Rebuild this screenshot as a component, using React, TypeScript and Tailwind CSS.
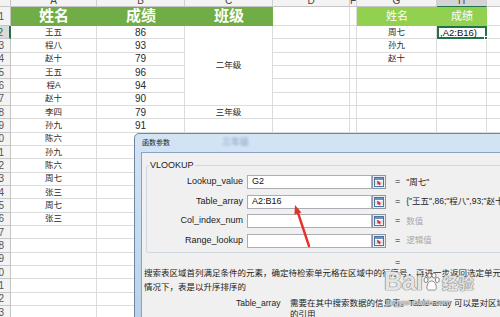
import React from 'react';

const names = ['王五', '程八', '赵十', '王五', '程A', '赵十', '李四', '孙九', '陈六', '孙九', '陈六', '周七', '张三', '周七', '张三'];
const scores = ['86', '93', '79', '96', '94', '90', '79', '91'];
const lookups = ['周七', '孙九', '赵十'];
const letters = ['A', 'B', 'C', 'D', 'F', 'G', 'H', 'I'];

const cell = 'flex items-center justify-center overflow-hidden whitespace-nowrap border-r border-b border-[#dcdcdc]';

function ColHead({ label, active }: { label: string; active?: boolean }) {
  return (
    <div
      className={`overflow-hidden border-r border-b border-r-[#d0d0d0] ${
        active ? 'bg-[#d4d4d4] border-b-[#217346]' : 'bg-[#f3f3f3] border-b-[#c6c6c6]'
      }`}
    >
      <div className="-mt-[5px] text-center text-[10px] leading-[12px] text-[#444]">{label}</div>
    </div>
  );
}

function RowHead({ n, active }: { n: number; active?: boolean }) {
  return (
    <div
      className={`flex items-center justify-end overflow-hidden whitespace-nowrap border-b border-r pr-[6px] text-[10px] ${
        active
          ? 'bg-[#dadada] text-[#217346] border-r-2 border-r-[#217346] border-b-[#c6c6c6]'
          : 'bg-[#f3f3f3] text-[#555] border-[#c6c6c6]'
      }`}
    >
      {n}
    </div>
  );
}

function CollapseIcon() {
  return (
    <svg width="14" height="14" viewBox="0 0 14 14" className="shrink-0">
      <rect x="0.5" y="0.5" width="13" height="13" fill="#e9edf1" stroke="#8d98a3" />
      <rect x="2.5" y="2.5" width="9" height="9" fill="#ffffff" stroke="#4d73a0" />
      <rect x="3" y="3" width="8" height="2" fill="#6b92c2" />
      <line x1="3" y1="7" x2="11" y2="7" stroke="#9fb4cc" strokeWidth="0.7" />
      <line x1="3" y1="9" x2="11" y2="9" stroke="#9fb4cc" strokeWidth="0.7" />
      <path d="M5 5.5 L9.5 8.5 L7.8 8.6 L8.6 10.2 L7.6 10.6 L6.9 9.1 L5.8 10 Z" fill="#d8262a" />
    </svg>
  );
}

const fields = [
  { label: 'Lookup_value', value: 'G2', result: '"周七"', muted: false },
  { label: 'Table_array', value: 'A2:B16', result: '{"王五",86;"程八",93;"赵十",79;"王五",96', muted: false },
  { label: 'Col_index_num', value: '', result: '数值', muted: true },
  { label: 'Range_lookup', value: '', result: '逻辑值', muted: true },
];

function Dialog() {
  return (
    <div className="absolute left-[134px] top-[133px] h-[200px] w-[400px] rounded-tl-[5px] border border-[#6f86a3] bg-linear-to-b from-[#d3e4f5] to-[#b8d0ea]">
      <div className="flex h-[18px] items-center pl-[7px]">
        <span className="text-[7px] text-[#1e1e1e]">函数参数</span>
        <span className="ml-[52px] text-[9px] text-[#6d86a6] opacity-70 blur-[1px]">三年级</span>
      </div>
      <div className="ml-[6px] h-full border border-[#8aa2bf] bg-[#f0f0f0]">
        <div className="pt-[6px]">
          <fieldset className="ml-[4px] rounded-[3px] border border-[#d0d7de] pb-[4px] pt-[4px]">
            <legend className="ml-[2px] px-[1px] text-[9px] leading-[12px] text-[#222]">VLOOKUP</legend>
            <div className="flex flex-col gap-[5.5px]">
              {fields.map((f) => (
                <div key={f.label} className="flex h-[14px] items-center whitespace-nowrap">
                  <div className="w-[96px] shrink-0 text-right text-[9px] text-[#222]">{f.label}</div>
                  <div className="ml-[4px] flex h-[14px] w-[125px] shrink-0 items-center border border-[#abadb3] bg-white pl-[4px] text-[9px] text-[#111]">
                    {f.value}
                  </div>
                  <CollapseIcon />
                  <div className="ml-[9px] text-[9px] text-[#222]">=</div>
                  <div className={`ml-[6px] text-[8.5px] ${f.muted ? 'text-[#a8a8a8]' : 'text-[#222]'}`}>{f.result}</div>
                </div>
              ))}
            </div>
          </fieldset>
        </div>
        <div className="mt-[4px] pl-[253px] text-[9px] leading-[10px] text-[#222]">=</div>
        <div className="-mt-[1px] whitespace-nowrap pl-[2px] text-[8.5px] leading-[14px] text-[#222]">
          <div>搜索表区域首列满足条件的元素，确定待检索单元格在区域中的行序号，再进一步返回选定单元格的值。默认</div>
          <div>情况下，表是以升序排序的</div>
        </div>
        <div className="mt-[4px] flex whitespace-nowrap pl-[94px] text-[8.5px] leading-[11px] text-[#222]">
          <div className="w-[54px] shrink-0 text-[8.5px]">Table_array</div>
          <div>
            <div>需要在其中搜索数据的信息表。Table-array 可以是对区域或区域名称</div>
            <div>的引用</div>
          </div>
        </div>
      </div>
    </div>
  );
}

function Watermark() {
  const glyph = 'text-white/80 [text-shadow:0_0_1px_#7a7a7a,0_0_1px_#7a7a7a,0_0_1px_#7a7a7a]';
  return (
    <div className="pointer-events-none absolute left-[384px] top-[268px]">
      <div className="flex items-end">
        <span className={`font-['Liberation_Sans',sans-serif] text-[25px] font-bold leading-[26px] ${glyph}`}>Bai</span>
        <svg width="17" height="20" viewBox="0 0 17 20" className="mb-[2px]">
          <g fill="#ffffff" fillOpacity="0.8" stroke="#7a7a7a" strokeWidth="0.9">
            <ellipse cx="3" cy="8" rx="2" ry="2.6" />
            <ellipse cx="6.5" cy="3.5" rx="2" ry="2.6" />
            <ellipse cx="11" cy="3.5" rx="2" ry="2.6" />
            <ellipse cx="14.3" cy="8" rx="2" ry="2.6" />
            <path d="M8.6 9 C5 9 3.5 14 4 16.5 C4.6 19 7 18 8.6 18 C10.3 18 12.7 19 13.2 16.5 C13.7 14 12.2 9 8.6 9 Z" />
          </g>
        </svg>
        <span className={`ml-[2px] font-['Noto_Sans_CJK_SC',sans-serif] text-[16px] font-bold leading-[24px] ${glyph}`}>经验</span>
      </div>
      <div className={`ml-[2px] mt-[4px] text-[8px] leading-[10px] ${glyph}`}>jingyan.baidu.com</div>
    </div>
  );
}

function Arrow() {
  return (
    <svg className="pointer-events-none absolute left-[285px] top-[200px]" width="30" height="50" viewBox="0 0 30 50">
      <line x1="24" y1="46" x2="13.2" y2="13.5" stroke="#e5302c" strokeWidth="2.4" strokeLinecap="round" />
      <path d="M10 5 L16.4 12.4 L9.4 14.6 Z" fill="#e5302c" />
    </svg>
  );
}

export default function App() {
  const rows = Array.from({ length: 22 }, (_, i) => i + 2);
  return (
    <div className="relative h-[317px] w-[500px] overflow-hidden bg-white font-['Liberation_Sans','Noto_Sans_CJK_SC',sans-serif] text-[#2a2a2a]">
      <div className="grid grid-cols-[11px_86px_88px_88px_77px_7px_80px_50px_60px] grid-rows-[7px_19px_repeat(22,13.333px)]">
        <div className="border-r border-b border-[#c6c6c6] bg-[#f3f3f3]" />
        {letters.map((l) => (
          <ColHead key={l} label={l} active={l === 'H'} />
        ))}

        <RowHead n={1} />
        <div className="flex items-center justify-center bg-[#70ad47] text-[15px] font-bold text-white">姓名</div>
        <div className="flex items-center justify-center bg-[#70ad47] text-[15px] font-bold text-white">成绩</div>
        <div className="flex items-center justify-center bg-[#70ad47] text-[15px] font-bold text-white">班级</div>
        <div className={cell} />
        <div className={cell} />
        <div className="flex items-center justify-center bg-[#92d050] text-[11px] text-white">姓名</div>
        <div className="flex items-center justify-center bg-[#92d050] text-[11px] text-white">成绩</div>
        <div className={cell} />

        {rows.map((r) => (
          <React.Fragment key={r}>
            <RowHead n={r} active={r === 2} />
            <div className={`${cell} text-[8.5px]`}>{names[r - 2] ?? ''}</div>
            <div className={`${cell} text-[10px]`}>{scores[r - 2] ?? ''}</div>
            {r === 2 && <div className={`${cell} row-span-6 text-[8.5px]`}>二年级</div>}
            {r === 8 && <div className={`${cell} text-[8.5px]`}>三年级</div>}
            {r > 8 && <div className={cell} />}
            <div className={cell} />
            <div className={cell} />
            <div className={`${cell} text-[8.5px]`}>{lookups[r - 2] ?? ''}</div>
            {r === 2 ? (
              <div className="relative flex items-center overflow-visible whitespace-nowrap border-2 border-[#217346] pl-[1px] text-[9.5px] text-[#111]">
                ,A2:B16)
                <div className="absolute -bottom-[3px] -right-[3px] h-[4px] w-[4px] border border-white bg-[#217346]" />
              </div>
            ) : (
              <div className={cell} />
            )}
            <div className={cell} />
          </React.Fragment>
        ))}
      </div>
      <Dialog />
      <Arrow />
      <Watermark />
    </div>
  );
}
